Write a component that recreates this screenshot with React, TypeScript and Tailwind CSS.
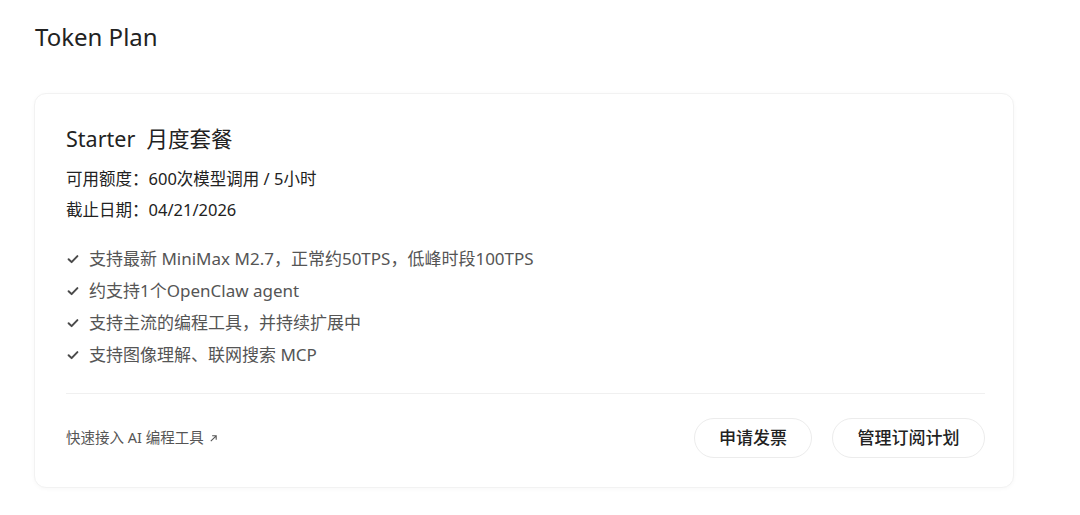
import React from "react";

const Check = () => (
  <svg width="12" height="12" viewBox="0 0 12 12" className="shrink-0">
    <path d="M1.6 6.2 L4.6 9.1 L10.4 3.1" fill="none" stroke="#4a4a4a" strokeWidth="2" strokeLinecap="round" strokeLinejoin="round" />
  </svg>
);

export default function App() {
  const features = [
    "支持最新 MiniMax M2.7，正常约50TPS，低峰时段100TPS",
    "约支持1个OpenClaw agent",
    "支持主流的编程工具，并持续扩展中",
    "支持图像理解、联网搜索 MCP",
  ];
  return (
    <div
      className="min-h-[515px] w-[1080px] bg-white pl-[34px] pt-[22px] text-[#1f1f1f]"
      style={{ fontFamily: '"Noto Sans", "Noto Sans CJK SC", sans-serif' }}
    >
      <h1 className="ml-[1px] text-[24px] leading-[30px] font-normal text-[#222]">Token Plan</h1>
      <div className="mt-[41px] w-[980px] rounded-xl border border-[#f2f2f2] bg-white pl-[31px] pr-7 pb-[29px] pt-[31px] shadow-[0_1px_4px_rgba(0,0,0,0.03)]">
        <div className="text-[21.5px] leading-[28px] text-[#222]">Starter&nbsp; 月度套餐</div>
        <div className="mt-[10px] text-[16.5px] leading-[31px] text-[#222]">
          <div>可用额度：600次模型调用 / 5小时</div>
          <div>截止日期：04/21/2026</div>
        </div>
        <ul className="mt-[18px] flex flex-col">
          {features.map((f) => (
            <li key={f} className="flex items-center gap-[10px] pl-[1px] text-[17px] leading-[32px] text-[#555]">
              <Check />
              <span>{f}</span>
            </li>
          ))}
        </ul>
        <div className="mt-[22px] h-px w-full bg-[#f0f0f0]" />
        <div className="mt-[24px] flex items-center justify-between">
          <a className="flex items-center gap-[5px] text-[14.5px] text-[#555]">
            快速接入 AI 编程工具
            <svg width="9" height="9" viewBox="0 0 10 10">
              <path d="M2 8 L8 2 M3.5 2 H8 V6.5" fill="none" stroke="#555" strokeWidth="1.2" />
            </svg>
          </a>
          <div className="flex items-center gap-5">
            <button className="h-[40px] w-[118px] rounded-full border border-[#ececec] bg-white text-[17px] font-medium text-[#222]">
              申请发票
            </button>
            <button className="h-[40px] w-[153px] rounded-full border border-[#ececec] bg-white text-[17px] font-medium text-[#222]">
              管理订阅计划
            </button>
          </div>
        </div>
      </div>
    </div>
  );
}
